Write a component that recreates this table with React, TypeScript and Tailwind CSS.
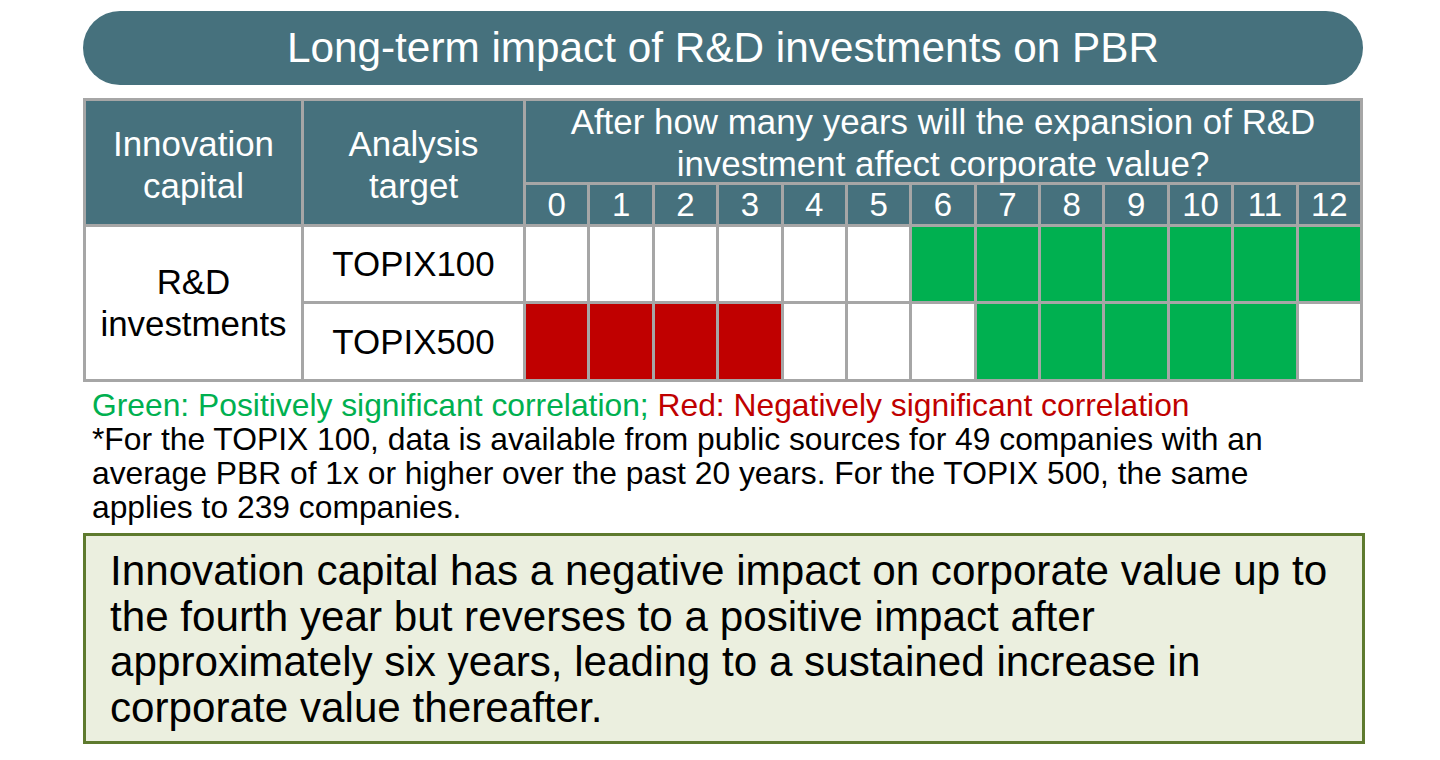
const years = [0, 1, 2, 3, 4, 5, 6, 7, 8, 9, 10, 11, 12];

type Mark = 'g' | 'r' | '';

const topix100: Mark[] = ['', '', '', '', '', '', 'g', 'g', 'g', 'g', 'g', 'g', 'g'];
const topix500: Mark[] = ['r', 'r', 'r', 'r', '', '', '', 'g', 'g', 'g', 'g', 'g', ''];

function Cell({ mark }: { mark: Mark }) {
  if (mark === 'g') return <div className="bg-[#00b050]" />;
  if (mark === 'r') return <div className="bg-[#c00000]" />;
  return <div className="bg-white" />;
}

export default function App() {
  return (
    <div className="w-[1440px] h-[760px] bg-white font-['Liberation_Sans',Arial,sans-serif] overflow-hidden">
      <div className="ml-[83px] w-[1280px] pt-[11px]">
        <div className="h-[74px] rounded-full bg-[#46717d] flex items-center justify-center">
          <h1 className="text-white text-[42.3px] leading-none">Long-term impact of R&amp;D investments on PBR</h1>
        </div>

        <div className="mt-[13px] grid grid-cols-[215px_219px_repeat(13,minmax(0,1fr))] grid-rows-[81px_39px_74px_75px] gap-[3px] p-[3px] bg-[#a6a6a6] text-[34.9px] leading-[42px]">
          <div className="row-span-2 bg-[#46717d] text-white flex items-center justify-center text-center pt-1">
            Innovation<br />capital
          </div>
          <div className="row-span-2 bg-[#46717d] text-white flex items-center justify-center text-center pt-1">
            Analysis<br />target
          </div>
          <div className="col-span-13 bg-[#46717d] text-white flex items-center justify-center text-center pt-[2px] whitespace-nowrap">
            After how many years will the expansion of R&amp;D<br />investment affect corporate value?
          </div>
          {years.map((y) => (
            <div key={y} className="bg-[#46717d] text-white flex items-center justify-center text-[33px]">
              {y}
            </div>
          ))}

          <div className="row-span-2 bg-white text-black flex items-center justify-center text-center">
            R&amp;D<br />investments
          </div>
          <div className="bg-white text-black flex items-center justify-center">TOPIX100</div>
          {topix100.map((m, i) => (
            <Cell key={i} mark={m} />
          ))}
          <div className="bg-white text-black flex items-center justify-center">TOPIX500</div>
          {topix500.map((m, i) => (
            <Cell key={i} mark={m} />
          ))}
        </div>

        <div className="mt-[6px] pl-[9px] text-[31.8px] leading-[34px] text-black whitespace-nowrap">
          <p>
            <span className="text-[#00b050]">Green: Positively significant correlation; </span>
            <span className="text-[#c00000]">Red: Negatively significant correlation</span>
          </p>
          <p>
            *For the TOPIX 100, data is available from public sources for 49 companies with an
            <br />
            average PBR of 1x or higher over the past 20 years. For the TOPIX 500, the same
            <br />
            applies to 239 companies.
          </p>
        </div>

        <div className="mt-[9px] w-[1282px] h-[211px] border-[3px] border-[#5e7a2e] bg-[#ebefdf] pl-[24px] pt-[12px] whitespace-nowrap">
          <p className="text-[42.2px] leading-[45.5px] text-black">
            Innovation capital has a negative impact on corporate value up to
            <br />
            the fourth year but reverses to a positive impact after
            <br />
            approximately six years, leading to a sustained increase in
            <br />
            corporate value thereafter.
          </p>
        </div>
      </div>
    </div>
  );
}
